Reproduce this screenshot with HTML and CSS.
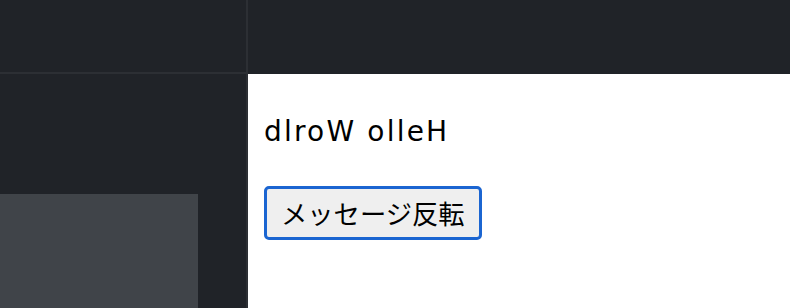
FILE: index.html
```html
<!DOCTYPE html>
<html lang="ja">
<head>
<meta charset="utf-8">
<title>Reverse</title>
<link rel="stylesheet" href="styles.css">
</head>
<body>
<div class="app">
  <aside class="sidebar">
    <div class="sidebar-head"></div>
    <div class="sidebar-body">
      <div class="sidebar-block"></div>
    </div>
  </aside>
  <div class="divider"></div>
  <main class="main">
    <div class="main-head"></div>
    <div class="preview">
      <p class="message">dlroW olleH</p>
      <button class="reverse-btn" type="button">メッセージ反転</button>
    </div>
  </main>
</div>
</body>
</html>
```

FILE: styles.css
```css
html, body {
  margin: 0;
  padding: 0;
  height: 100%;
  overflow: hidden;
  background: #202328;
}

.app {
  display: grid;
  grid-template-columns: 246px 2px 1fr;
  height: 308px;
}

.sidebar {
  display: flex;
  flex-direction: column;
  background: #202328;
}

.sidebar-head {
  height: 72px;
  border-bottom: 2px solid #2c2f34;
  flex: none;
}

.sidebar-body {
  flex: 1;
  padding-top: 120px;
  display: flex;
  flex-direction: column;
}

.sidebar-block {
  width: 198px;
  flex: 1;
  background: #404449;
}

.divider {
  background: #2c2f34;
}

.main {
  display: flex;
  flex-direction: column;
}

.main-head {
  height: 74px;
  flex: none;
  background: #202328;
}

.preview {
  flex: 1;
  background: #ffffff;
  padding: 42px 16px 0 16px;
  display: flex;
  flex-direction: column;
  align-items: flex-start;
}

.message {
  margin: 0;
  font-family: "DejaVu Sans", "Noto Sans CJK JP", sans-serif;
  font-size: 28px;
  line-height: 32px;
  letter-spacing: 2.2px;
  color: #000;
}

.reverse-btn {
  margin-top: 38px;
  font-family: "Noto Sans CJK JP", sans-serif;
  font-size: 26.3px;
  line-height: 32px;
  color: #000;
  background: #efefef;
  border: 3px solid #1b65d1;
  border-radius: 5px;
  padding: 8px 14px;
  cursor: pointer;
}
```
